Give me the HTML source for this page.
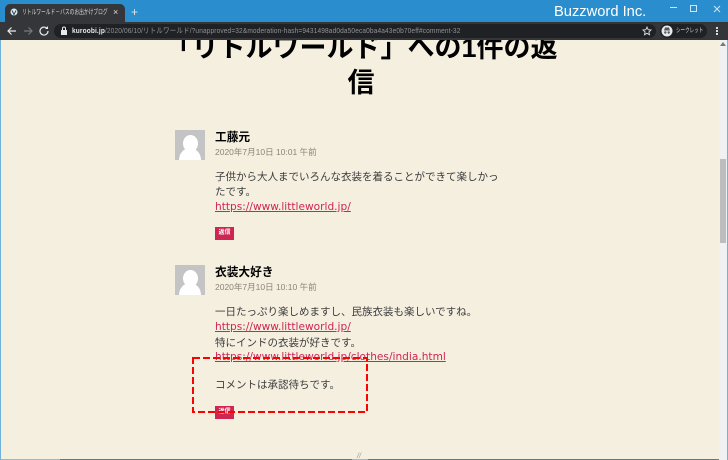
<!DOCTYPE html>
<html lang="ja"><head><meta charset="utf-8"><title>リトルワールド</title>
<style>
html,body{margin:0;padding:0}
body{width:728px;height:460px;overflow:hidden;position:relative;background:#f5efe0;font-family:"Liberation Sans","Noto Sans CJK JP",sans-serif;color:#333}
.a{position:absolute;white-space:nowrap}
.t{font-size:10.5px;line-height:15px;color:#3c3c3c}
.l{font-family:"DejaVu Sans","Noto Sans CJK JP",sans-serif;font-size:10.6px;color:#cd2653;text-decoration:underline;text-underline-offset:1px}
.n{font-size:11.7px;font-weight:700;color:#000;line-height:16px}
.d{font-size:8.5px;color:#8a8578;line-height:12px}
.b{background:#cd2653;color:#fff;font-size:6px;font-weight:700;line-height:13px;height:13px;width:19px;text-align:center}
.av{position:absolute;width:30px;height:30px;background:#c4c4c4;overflow:hidden}
</style></head><body>
<div class="a" style="left:0;top:0;width:728px;height:22px;background:#2a8dcd"></div>
<div class="a" style="left:5px;top:4px;width:120px;height:18px;background:#35363a;border-radius:5px 5px 0 0"></div>
<div class="a" style="left:0;top:22px;width:728px;height:18px;background:#35363a"></div>
<div class="a" style="left:54px;top:24px;width:602px;height:14px;background:#202124;border-radius:7px"></div>
<svg class="a" style="left:10px;top:8px" width="8" height="8" viewBox="0 0 8 8"><circle cx="4" cy="4" r="3.500" fill="#d6eaf6"/><path d="M2 2.500l2 4 2-4" fill="none" stroke="#35363a" stroke-width=".9"/></svg>
<div class="a" style="left:22px;top:7px;font-size:7px;line-height:12px;color:#d8d8d8;transform:scaleX(.68);transform-origin:0 0">リトルワールド－バスのお出かけブログ</div>
<div class="a" style="left:113px;top:6px;font-size:9px;line-height:13px;color:#ddd">×</div>
<div class="a" style="left:131px;top:5px;font-size:12px;line-height:15px;color:#dfe8ee">+</div>
<svg class="a" style="left:6px;top:25px" width="44" height="12" viewBox="0 0 44 12"><path d="M10 6H2M5.500 2.500L2 6l3.500 3.500" fill="none" stroke="#e8eaed" stroke-width="1.200"/><path d="M18 6h8M22.500 2.500L26 6l-3.500 3.500" fill="none" stroke="#77787b" stroke-width="1.200"/><path d="M42 6a4 4 0 1 1-1.200-2.800" fill="none" stroke="#e8eaed" stroke-width="1.200"/><path d="M42 1v3h-3z" fill="#e8eaed"/></svg>
<svg class="a" style="left:60px;top:26px" width="8" height="10" viewBox="0 0 8 10"><rect x="1" y="4" width="6" height="5" fill="#e8eaed"/><path d="M2.500 4V2.500a1.500 1.500 0 0 1 3 0V4" fill="none" stroke="#e8eaed"/></svg>
<div class="a" style="left:72px;top:24px;font-size:7.4px;line-height:14px;color:#8f9194;letter-spacing:.02em;transform:scaleX(.886);transform-origin:0 0"><span style="color:#e8eaed;font-weight:700">kuroobi.jp</span>/2020/06/10/リトルワールド/?unapproved=32&amp;moderation-hash=9431498ad0da50eca0ba4a43e0b70eff#comment-32</div>
<svg class="a" style="left:642px;top:26px" width="10" height="10" viewBox="0 0 10 10"><path d="M5 1l1.200 2.700 2.800.300-2.100 1.900.600 2.800L5 7.300 2.500 8.700l.6-2.800L1 4l2.800-.3z" fill="none" stroke="#dcdde0" stroke-width=".9"/></svg>
<div class="a" style="left:660px;top:24px;width:47px;height:14px;background:#202124;border-radius:7px"></div>
<svg class="a" style="left:661px;top:25px" width="12" height="12" viewBox="0 0 12 12"><circle cx="6" cy="6" r="5.500" fill="#e8eaed"/><path d="M3 5.500h6L8 2.500H4z" fill="#55575b"/><circle cx="4.300" cy="7.500" r="1.200" fill="#55575b"/><circle cx="7.700" cy="7.500" r="1.200" fill="#55575b"/></svg>
<div class="a" style="left:676px;top:24px;font-size:6.500px;line-height:14px;color:#d8d8dc;transform:scaleX(.7);transform-origin:0 0">シークレット</div>
<div class="a" style="left:716px;top:27px;width:2px;height:2px;background:#ddd;box-shadow:0 3px 0 #ddd,0 6px 0 #ddd"></div>
<div class="a" style="left:554px;top:1px;font-size:14.7px;line-height:22px;color:#fff">Buzzword Inc.</div>
<div class="a" style="left:670px;top:7px;width:7px;height:1px;background:#cfe6f4"></div>
<div class="a" style="left:690px;top:5px;width:5px;height:5px;border:1px solid #cfe6f4"></div>
<svg class="a" style="left:713px;top:5px" width="8" height="8" viewBox="0 0 8 8"><path d="M1 1l6 6M7 1L1 7" stroke="#cfe6f4"/></svg>

<div class="a" style="left:0;top:40px;width:728px;height:420px;overflow:hidden">
<div class="a" style="left:164px;top:-9px;font-size:27px;line-height:35px;font-weight:700;color:#000;width:394px;text-align:center">「リトルワールド」への1件の返<br>信</div>
</div>

<div class="av" style="left:175px;top:130px"><div class="a" style="left:8px;top:5px;width:15px;height:17px;border-radius:50%;background:#fff"></div><div class="a" style="left:4px;top:18px;width:22px;height:24px;border-radius:50%;background:#fff"></div></div>
<div class="a n" style="left:215px;top:130px">工藤元</div>
<div class="a d" style="left:215px;top:146px">2020年7月10日 10:01 午前</div>
<div class="a t" style="left:215px;top:170px">子供から大人までいろんな衣装を着ることができて楽しかっ</div>
<div class="a t" style="left:215px;top:185px">たです。</div>
<div class="a t l" style="left:215px;top:200px">https://www.littleworld.jp/</div>
<div class="a b" style="left:215px;top:227px">返信</div>

<div class="av" style="left:175px;top:265px"><div class="a" style="left:8px;top:5px;width:15px;height:17px;border-radius:50%;background:#fff"></div><div class="a" style="left:4px;top:18px;width:22px;height:24px;border-radius:50%;background:#fff"></div></div>
<div class="a n" style="left:215px;top:265px">衣装大好き</div>
<div class="a d" style="left:215px;top:281px">2020年7月10日 10:10 午前</div>
<div class="a t" style="left:215px;top:305px">一日たっぷり楽しめますし、民族衣装も楽しいですね。</div>
<div class="a t l" style="left:215px;top:320px">https://www.littleworld.jp/</div>
<div class="a t" style="left:215px;top:336px">特にインドの衣装が好きです。</div>
<div class="a t l" style="left:215px;top:350px">https://www.littleworld.jp/clothes/india.html</div>
<div class="a t" style="left:215px;top:378px">コメントは承認待ちです。</div>
<div class="a b" style="left:215px;top:406px">返信</div>
<svg class="a" style="left:192px;top:356px" width="178" height="60"><rect x="1" y="2" width="174" height="54" fill="none" stroke="#f00" stroke-width="2" stroke-dasharray="7 3" shape-rendering="crispEdges"/></svg>

<div class="a" style="left:719px;top:40px;width:8px;height:420px;background:#f1f1f1"></div>
<div class="a" style="left:720px;top:159px;width:6px;height:84px;background:#bdbdbd"></div>
<div class="a" style="left:720px;top:42px;width:0;height:0;border:3px solid transparent;border-bottom:4px solid #777;border-top:0"></div>
<div class="a" style="left:0;top:40px;width:1px;height:420px;background:#6fb3dc"></div>
<div class="a" style="left:727px;top:40px;width:1px;height:420px;background:#6fb3dc"></div>
<div class="a" style="left:1px;top:459px;width:59px;height:1px;background:#8fbcd4"></div>
<div class="a" style="left:60px;top:459px;width:292px;height:1px;background:#4d8199"></div>
<div class="a" style="left:352px;top:459px;width:16px;height:1px;background:#8fbcd4"></div>
<div class="a" style="left:368px;top:459px;width:351px;height:1px;background:#4d8199"></div>
<div class="a" style="left:357px;top:453px;font-size:7px;line-height:7px;color:#999;font-style:italic">//</div>
</body></html>
